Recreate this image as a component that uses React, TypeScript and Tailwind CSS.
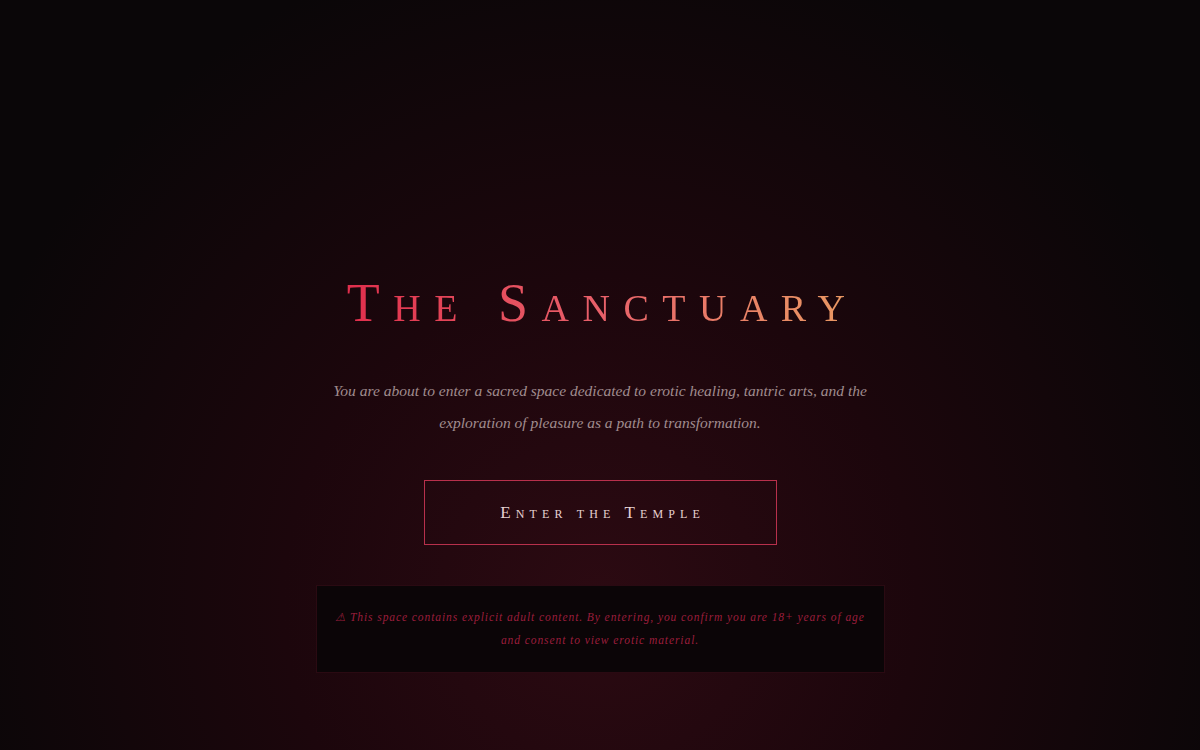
import React from "react";

export default function App() {
  return (
    <div className="w-full h-[750px] overflow-hidden flex flex-col items-center bg-[radial-gradient(ellipse_55%_90%_at_50%_80%,#2c0a12_0%,#1c060c_48%,#0a0608_100%)] font-['Liberation_Serif','DejaVu_Serif',serif]">
      <div className="flex flex-col items-center pt-[272px]">
        <h1 className="text-[54px] leading-[62px] tracking-[0.25em] pl-[0.1em] bg-linear-to-r from-[#e02c4c] via-[#e8606a] to-[#e89a62] bg-clip-text text-transparent font-normal [font-variant-caps:small-caps]">
          The Sanctuary
        </h1>
        <p className="mt-[41px] text-center italic text-[15.5px] leading-[32px] text-[#a08c8e]">
          You are about to enter a sacred space dedicated to erotic healing, tantric arts, and the
          <br />
          exploration of pleasure as a path to transformation.
        </p>
        <button className="mt-[41px] w-[353px] h-[65px] border border-[#b8304c] bg-transparent text-[#e6d2d2] text-[17px] tracking-[0.3em] pl-[0.3em] flex items-center justify-center [font-variant-caps:small-caps]">
          Enter the Temple
        </button>
        <div className="mt-[40px] w-[569px] h-[88px] border border-[#2a0a12] bg-[#0b0507] flex items-center justify-center">
          <p className="text-center italic text-[11.5px] leading-[23px] tracking-[0.08em] text-[#9c1e3c]">
            ⚠ This space contains explicit adult content. By entering, you confirm you are 18+ years of age
            <br />
            and consent to view erotic material.
          </p>
        </div>
      </div>
    </div>
  );
}
